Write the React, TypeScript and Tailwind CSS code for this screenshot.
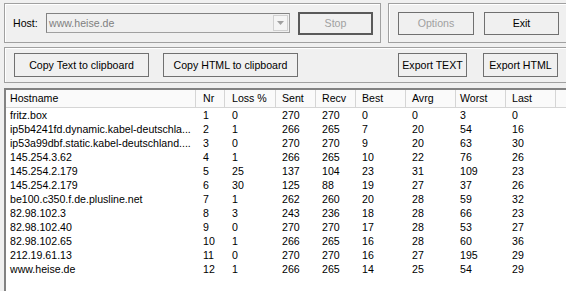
import React from 'react'

const columns = [
  { label: 'Hostname', w: 'w-[190px]', pad: 'pl-[4px]' },
  { label: 'Nr', w: 'w-[29px]', pad: 'pl-[7px]' },
  { label: 'Loss %', w: 'w-[51px]', pad: 'pl-[7px]' },
  { label: 'Sent', w: 'w-[40px]', pad: 'pl-[6px]' },
  { label: 'Recv', w: 'w-[40px]', pad: 'pl-[6px]' },
  { label: 'Best', w: 'w-[50px]', pad: 'pl-[6px]' },
  { label: 'Avrg', w: 'w-[50px]', pad: 'pl-[6px]' },
  { label: 'Worst', w: 'w-[50px]', pad: 'pl-[4px]' },
  { label: 'Last', w: 'w-[50px]', pad: 'pl-[6px]' },
]

const rows: (string | number)[][] = [
  ['fritz.box', 1, 0, 270, 270, 0, 0, 3, 0],
  ['ip5b4241fd.dynamic.kabel-deutschla...', 2, 1, 266, 265, 7, 20, 54, 16],
  ['ip53a99dbf.static.kabel-deutschland....', 3, 0, 270, 270, 9, 20, 63, 30],
  ['145.254.3.62', 4, 1, 266, 265, 10, 22, 76, 26],
  ['145.254.2.179', 5, 25, 137, 104, 23, 31, 109, 23],
  ['145.254.2.179', 6, 30, 125, 88, 19, 27, 37, 26],
  ['be100.c350.f.de.plusline.net', 7, 1, 262, 260, 20, 28, 59, 32],
  ['82.98.102.3', 8, 3, 243, 236, 18, 28, 66, 23],
  ['82.98.102.40', 9, 0, 270, 270, 17, 28, 53, 27],
  ['82.98.102.65', 10, 1, 266, 265, 16, 28, 60, 36],
  ['212.19.61.13', 11, 0, 270, 270, 16, 27, 195, 29],
  ['www.heise.de', 12, 1, 266, 265, 14, 25, 54, 29],
]

function Button({
  label,
  w,
  h = 'h-[23px]',
  disabled,
  isDefault,
}: {
  label: string
  w: string
  h?: string
  disabled?: boolean
  isDefault?: boolean
}) {
  return (
    <div
      className={`${w} ${h} flex shrink-0 items-center justify-center bg-[#f0f0f0] ${
        isDefault ? 'border-2 border-[#5a5a5a]' : 'border border-[#707070]'
      } ${disabled ? 'text-[#a0a0a0]' : 'text-black'}`}
    >
      {label}
    </div>
  )
}

export default function App() {
  return (
    <div className="h-[291px] w-[566px] overflow-hidden bg-[#f0f0f0] font-['Liberation_Sans',Arial,sans-serif] text-[10.6px] leading-none text-black">
      {/* top row */}
      <div className="flex pl-[4px] pt-[3px]">
        <div className="flex h-[40px] w-[377px] shrink-0 items-center border border-[#a0a0a0] shadow-[inset_1px_1px_0_#fff]">
          <span className="ml-[8px] w-[33px]">Host:</span>
          <div className="flex h-[20px] w-[244px] items-center border border-[#a0a0a0] border-t-[#828282] border-l-[#828282] bg-[#f0f0f0]">
            <span className="flex-1 pl-[2px] text-[#808080]">www.heise.de</span>
            <div className="mr-[1px] flex h-[16px] w-[15px] items-center justify-center border border-[#d0d0d0] bg-[#f4f4f4]">
              <svg width="7" height="4" viewBox="0 0 7 4">
                <path d="M0 0h7L3.5 4z" fill="#a0a0a0" />
              </svg>
            </div>
          </div>
          <div className="ml-[8px]">
            <Button label="Stop" w="w-[75px]" disabled isDefault />
          </div>
        </div>
        <div className="ml-[7px] flex h-[40px] flex-1 items-center gap-[10px] border border-r-0 border-[#a0a0a0] pl-[9px] shadow-[inset_1px_1px_0_#fff]">
          <Button label="Options" w="w-[76px]" disabled />
          <Button label="Exit" w="w-[75px]" />
        </div>
      </div>

      {/* second row */}
      <div className="ml-[4px] mt-[4px] flex h-[36px] items-center border border-r-0 border-[#a0a0a0] shadow-[inset_1px_1px_0_#fff]">
        <div className="ml-[9px]">
          <Button label="Copy Text to clipboard" w="w-[135px]" h="h-[24px]" />
        </div>
        <div className="ml-[14px]">
          <Button label="Copy HTML to clipboard" w="w-[135px]" h="h-[24px]" />
        </div>
        <div className="ml-[100px]">
          <Button label="Export TEXT" w="w-[69px]" h="h-[24px]" />
        </div>
        <div className="ml-[16px]">
          <Button label="Export HTML" w="w-[75px]" h="h-[24px]" />
        </div>
      </div>

      {/* list view */}
      <div className="ml-[4px] mt-[5px] h-[210px] border-l-2 border-t-2 border-[#828282] bg-white">
        <div className="flex h-[18px] items-center border-b border-[#d5d5d5] bg-[#fafafa]">
          {columns.map((c) => (
            <div
              key={c.label}
              className={`${c.w} ${c.pad} flex h-full shrink-0 items-center border-r border-[#d5d5d5]`}
            >
              {c.label}
            </div>
          ))}
          <div className="h-full flex-1" />
        </div>
        {rows.map((r, i) => (
          <div key={i} className="flex h-[14px] items-center">
            {r.map((v, j) => (
              <div
                key={j}
                className={`${columns[j].w} ${columns[j].pad} shrink-0 whitespace-nowrap`}
              >
                {v}
              </div>
            ))}
          </div>
        ))}
      </div>
    </div>
  )
}
